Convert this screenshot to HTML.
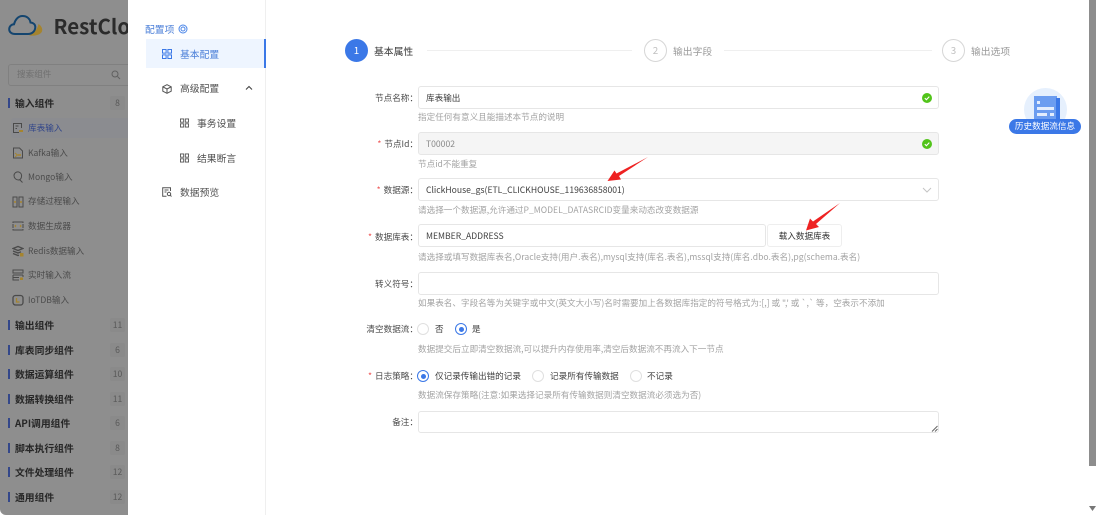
<!DOCTYPE html>
<html><head><meta charset="utf-8">
<style>
*{box-sizing:border-box}
html,body{margin:0;padding:0;width:1098px;height:515px;overflow:hidden;background:#fff}
body{font-family:"Noto Sans CJK SC","Liberation Sans",sans-serif;position:relative;color:#4a4a4a;filter:blur(.3px)}
.a{position:absolute;white-space:nowrap;line-height:14px}
.side{position:absolute;left:0;top:0;width:128px;height:515px;background:#8e8e8e;border-bottom-left-radius:6px;overflow:hidden}
.g{position:absolute;left:15px;font-size:9.8px;font-weight:bold;color:#262626;line-height:14px;white-space:nowrap}
.bar{position:absolute;left:8px;width:1.5px;height:10px;background:#33478a}
.b{position:absolute;left:110px;width:15px;height:14px;background:#8a8a8a;color:#585858;font-size:8.6px;line-height:14px;text-align:center;border-radius:2px}
.i{position:absolute;left:28px;font-size:8.6px;line-height:14px;color:#4b4b4b;white-space:nowrap}
.ic{position:absolute;left:12px;width:12px;height:12px;fill:none;stroke:#4a4a4a;stroke-width:1}
.m{position:absolute;font-size:9.8px;color:#505050;line-height:14px;white-space:nowrap}
.l{position:absolute;right:680px;font-size:8.6px;color:#4a4a4a;line-height:14px;white-space:nowrap}
.l i{font-style:normal;color:#ef5a5a;margin-right:3px}
.h{position:absolute;left:418px;font-size:8.6px;color:#a3a3a3;line-height:14px;white-space:nowrap}
.f{position:absolute;left:418px;width:521px;height:23px;border:1px solid #e6e6e6;border-radius:3px;background:#fff;font-size:8.6px;line-height:23px;padding-left:7px;color:#404040;white-space:nowrap}
.ok{position:absolute;left:922px;width:10px;height:10px}
.r{position:absolute;width:12px;height:12px;border:1px solid #e0e0e0;border-radius:50%;background:#fff}
.r.on{border-color:#3b78e7}
.r.on:after{content:"";position:absolute;left:2.5px;top:2.5px;width:5px;height:5px;border-radius:50%;background:#3b78e7}
.t{position:absolute;font-size:8.6px;line-height:14px;color:#404040;white-space:nowrap}
.st{position:absolute;top:39px;width:23px;height:23px;border:1px solid #d6d6d6;border-radius:50%;font-size:9.8px;line-height:21px;text-align:center;color:#c0c0c0;background:#fff}
.sl{position:absolute;top:50px;height:1px;background:#efefef}
.sx{position:absolute;top:44px;font-size:9.8px;line-height:14px;color:#9a9a9a;white-space:nowrap}
</style></head><body>

<div class="side">
  <svg style="position:absolute;left:8px;top:13px" width="36" height="24" viewBox="0 0 36 24"><path d="M21 22.5c5 .5 11 0 13-4 1-3-1-6-3.5-7.5-1 5-4 9-9.5 11.5z" fill="#a5842f"/><path d="M7 21c-3.5 0-5.8-2-5.8-4.8 0-2.700 2-4.700 4.800-4.900C7 7 10 3 14.500 3c4.800 0 7.500 3 8 6.500 3 .3 4.800 2 4.800 4.500 0 4-3 7-7.300 7z" fill="none" stroke="#14456f" stroke-width="2"/></svg>
  <div class="a" style="left:53.5px;top:13px;font-size:20.5px;line-height:24px;font-weight:bold;color:#2b2b2b">RestCloud</div>
  <div style="position:absolute;left:8px;top:64px;width:130px;height:22px;border:1px solid #808080;border-radius:3px"></div>
  <div class="a" style="left:17px;top:67px;font-size:8.6px;color:#707070">搜索组件</div>
  <svg style="position:absolute;left:111px;top:70px" width="10" height="10" viewBox="0 0 10 10"><circle cx="4" cy="4" r="3" fill="none" stroke="#606060"/><path d="M6.500 6.500L9 9" stroke="#606060"/></svg>

  <div class="bar" style="top:98px"></div><div class="g" style="top:96px">输入组件</div><div class="b" style="top:96px">8</div>
  <div style="position:absolute;left:11px;top:118px;width:117px;height:20px;background:#8b8c90;border-radius:3px 0 0 3px"></div>
  <svg class="ic" style="top:122px" viewBox="0 0 12 12"><path d="M7 10.500H1.500V1.500h8V6"/><path d="M3.500 4h3M3.500 6.500h1.500"/><path d="M7 9h4" stroke="#a5842f" stroke-width="2"/></svg><div class="i" style="top:121px;color:#33478a">库表输入</div>
  <svg class="ic" style="top:147px" viewBox="0 0 12 12"><path d="M1.500 11V1h6l3 3v7z"/><path d="M3 6l2.500 2L3 10" stroke="#a5842f"/><path d="M6 8h3" stroke="#a5842f" stroke-width="1.500"/></svg><div class="i" style="top:146px">Kafka输入</div>
  <svg class="ic" style="top:171px" viewBox="0 0 12 12"><path d="M2 4.500a3.800 3.800 0 1 1 7.500 1c0 2-1.500 3.500-3 3.500C4 9 2 7 2 4.500zM8 9l2.500 2.500"/></svg><div class="i" style="top:170px">Mongo输入</div>
  <svg class="ic" style="top:196px" viewBox="0 0 12 12"><rect x="1" y="1" width="4" height="10"/><rect x="7" y="1" width="4" height="10"/><path d="M2 6h2" stroke="#a5842f" stroke-width="1.500"/><path d="M8 6h2" stroke="#a5842f" stroke-width="1.500"/></svg><div class="i" style="top:194px">存储过程输入</div>
  <svg class="ic" style="top:220px" viewBox="0 0 12 12"><path d="M1 3V2h10v1M1 9v1h10V9M1 4v4M11 4v4"/><path d="M4 5L3 6l1 1M8 5l1 1-1 1" stroke="#a5842f"/></svg><div class="i" style="top:219px">数据生成器</div>
  <svg class="ic" style="top:245px" viewBox="0 0 12 12"><path d="M1 3.500L6 1.500l5 2-5 2zM1 6l5 2 3-1.200M1 8.500l5 2 1-.4" stroke-width="1.300"/><rect x="8" y="8" width="3.500" height="3.500" fill="#a5842f" stroke="none"/></svg><div class="i" style="top:244px">Redis数据输入</div>
  <svg class="ic" style="top:269px" viewBox="0 0 12 12"><rect x="1" y="1" width="10" height="3"/><path d="M1 6h10M1 6v5h6M11 6v2M1 8.500h6"/><rect x="8" y="8.500" width="3" height="2.500" fill="#a5842f" stroke="none"/></svg><div class="i" style="top:268px">实时输入流</div>
  <svg class="ic" style="top:294px" viewBox="0 0 12 12"><rect x="1" y="1.500" width="10" height="9.500" rx="2.500" stroke-width="1.300"/><path d="M4.500 4v4h3" stroke="#a5842f" stroke-width="1.300"/></svg><div class="i" style="top:293px">IoTDB输入</div>

  <div class="bar" style="top:320px"></div><div class="g" style="top:318px">输出组件</div><div class="b" style="top:318px">11</div>
  <div class="bar" style="top:345px"></div><div class="g" style="top:343px">库表同步组件</div><div class="b" style="top:343px">6</div>
  <div class="bar" style="top:369px"></div><div class="g" style="top:367px">数据运算组件</div><div class="b" style="top:367px">10</div>
  <div class="bar" style="top:394px"></div><div class="g" style="top:392px">数据转换组件</div><div class="b" style="top:392px">11</div>
  <div class="bar" style="top:418px"></div><div class="g" style="top:416px">API调用组件</div><div class="b" style="top:416px">6</div>
  <div class="bar" style="top:443px"></div><div class="g" style="top:441px">脚本执行组件</div><div class="b" style="top:441px">8</div>
  <div class="bar" style="top:467px"></div><div class="g" style="top:465px">文件处理组件</div><div class="b" style="top:465px">12</div>
  <div class="bar" style="top:492px"></div><div class="g" style="top:490px">通用组件</div><div class="b" style="top:490px">12</div>
</div>

<!-- config menu -->
<div class="a" style="left:145px;top:22px;font-size:9.8px;color:#4b7fd8">配置项</div>
<svg style="position:absolute;left:178px;top:24px" width="10" height="10" viewBox="0 0 10 10"><circle cx="5" cy="5" r="4" fill="none" stroke="#4b86e8"/><circle cx="5" cy="5" r="2" fill="none" stroke="#4b86e8"/></svg>
<div style="position:absolute;left:265px;top:0;width:1px;height:515px;background:#efefef"></div>
<div style="position:absolute;left:146px;top:39px;width:120px;height:29px;background:#eef5ff;border-right:2px solid #3b78e7"></div>
<svg style="position:absolute;left:162px;top:49px" width="10" height="10" viewBox="0 0 10 10" fill="none" stroke="#3b78e7"><rect x=".5" y=".5" width="3.600" height="3.600"/><rect x="5.900" y=".5" width="3.600" height="3.600"/><rect x=".5" y="5.900" width="3.600" height="3.600"/><rect x="5.900" y="5.900" width="3.600" height="3.600"/></svg>
<div class="m" style="left:180px;top:47px;color:#4b7fd8">基本配置</div>
<svg style="position:absolute;left:162px;top:84px" width="10" height="10" viewBox="0 0 10 10" fill="none" stroke="#555"><path d="M5 .7L9.200 2.800V7.200L5 9.300.8 7.200V2.800zM.8 2.800L5 5l4.200-2.200M5 5v4.300"/></svg>
<div class="m" style="left:180px;top:81px">高级配置</div>
<svg style="position:absolute;left:245px;top:85px" width="8" height="6" viewBox="0 0 8 6" fill="none" stroke="#444" stroke-width="1.100"><path d="M1 4.500L4 1.500l3 3"/></svg>
<svg style="position:absolute;left:180px;top:118px" width="9" height="10" viewBox="0 0 10 10" fill="none" stroke="#555"><rect x=".5" y=".5" width="3.600" height="3.600"/><rect x="5.900" y=".5" width="3.600" height="3.600"/><rect x=".5" y="5.900" width="3.600" height="3.600"/><rect x="5.900" y="5.900" width="3.600" height="3.600"/></svg>
<div class="m" style="left:197px;top:116px">事务设置</div>
<svg style="position:absolute;left:180px;top:153px" width="9" height="10" viewBox="0 0 10 10" fill="none" stroke="#555"><rect x=".5" y=".5" width="3.600" height="3.600"/><rect x="5.900" y=".5" width="3.600" height="3.600"/><rect x=".5" y="5.900" width="3.600" height="3.600"/><rect x="5.900" y="5.900" width="3.600" height="3.600"/></svg>
<div class="m" style="left:197px;top:151px">结果断言</div>
<svg style="position:absolute;left:162px;top:187px" width="10" height="10" viewBox="0 0 10 10" fill="none" stroke="#555"><path d="M8.500 4V.7H.7v8.600h3.800M2.500 3h4M2.500 5h2"/><circle cx="7" cy="7" r="1.700"/><path d="M8.200 8.200L9.500 9.500"/></svg>
<div class="m" style="left:180px;top:185px">数据预览</div>

<!-- steps -->
<div class="st" style="left:345px;background:#3b78e7;border-color:#3b78e7;color:#fff">1</div>
<div class="sx" style="left:374px;color:#3a3a3a">基本属性</div>
<div class="sl" style="left:427px;width:205px"></div>
<div class="st" style="left:644px">2</div>
<div class="sx" style="left:673px">输出字段</div>
<div class="sl" style="left:724px;width:208px"></div>
<div class="st" style="left:942px">3</div>
<div class="sx" style="left:971px">输出选项</div>

<!-- form -->
<div class="l" style="top:91px">节点名称：</div>
<div class="f" style="top:86px">库表输出</div>
<svg class="ok" style="top:93px" viewBox="0 0 10 10"><circle cx="5" cy="5" r="5" fill="#52c41a"/><path d="M2.800 5.100L4.400 6.700 7.300 3.600" fill="none" stroke="#fff" stroke-width="1.100"/></svg>
<div class="h" style="top:110px">指定任何有意义且能描述本节点的说明</div>

<div class="l" style="top:137px"><i>*</i>节点Id：</div>
<div class="f" style="top:132px;background:#f5f5f5;color:#8a8a8a">T00002</div>
<svg class="ok" style="top:139px" viewBox="0 0 10 10"><circle cx="5" cy="5" r="5" fill="#52c41a"/><path d="M2.800 5.100L4.400 6.700 7.300 3.600" fill="none" stroke="#fff" stroke-width="1.100"/></svg>
<div class="h" style="top:157px">节点id不能重复</div>

<div class="l" style="top:183px"><i>*</i>数据源：</div>
<div class="f" style="top:178px">ClickHouse_gs(ETL_CLICKHOUSE_119636858001)</div>
<svg style="position:absolute;left:922px;top:187px" width="10" height="6" viewBox="0 0 10 6" fill="none" stroke="#c4c4c4"><path d="M1 1l4 4 4-4"/></svg>
<div class="h" style="top:203px">请选择一个数据源,允许通过P_MODEL_DATASRCID变量来动态改变数据源</div>

<div class="l" style="top:230px"><i>*</i>数据库表：</div>
<div class="f" style="top:224px;width:348px">MEMBER_ADDRESS</div>
<div style="position:absolute;left:767px;top:224px;width:75px;height:23px;border:1px solid #eee;border-radius:3px;font-size:8.6px;line-height:22px;text-align:center;color:#333">载入数据库表</div>
<div class="h" style="top:250px">请选择或填写数据库表名,Oracle支持(用户.表名),mysql支持(库名.表名),mssql支持(库名.dbo.表名),pg(schema.表名)</div>

<div class="l" style="top:277px">转义符号：</div>
<div class="f" style="top:272px"></div>
<div class="h" style="top:296px">如果表名、字段名等为关键字或中文(英文大小写)名时需要加上各数据库指定的符号格式为:[,] 或 ",' 或 `,` 等，空表示不添加</div>

<div class="l" style="top:322px">清空数据流：</div>
<div class="r" style="left:417px;top:323px"></div><div class="t" style="left:435px;top:322px">否</div>
<div class="r on" style="left:455px;top:323px"></div><div class="t" style="left:472px;top:322px">是</div>
<div class="h" style="top:342px">数据提交后立即清空数据流,可以提升内存使用率,清空后数据流不再流入下一节点</div>

<div class="l" style="top:369px"><i>*</i>日志策略：</div>
<div class="r on" style="left:417px;top:370px"></div><div class="t" style="left:435px;top:369px">仅记录传输出错的记录</div>
<div class="r" style="left:532px;top:370px"></div><div class="t" style="left:550px;top:369px">记录所有传输数据</div>
<div class="r" style="left:630px;top:370px"></div><div class="t" style="left:647px;top:369px">不记录</div>
<div class="h" style="top:388px">数据流保存策略(注意:如果选择记录所有传输数据则清空数据流必须选为否)</div>

<div class="l" style="top:415px">备注：</div>
<div class="f" style="top:411px;height:22px"></div>
<svg style="position:absolute;left:931px;top:425px" width="7" height="7" viewBox="0 0 7 7" stroke="#666" fill="none"><path d="M1 6.500L6.500 1M4 6.500L6.500 4"/></svg>

<!-- arrows -->
<svg style="position:absolute;left:0;top:0" width="1098" height="515" viewBox="0 0 1098 515">
<path d="M648 157L619 176L621 179.500L607.500 181L614.500 170.500L616.500 173.500Z" fill="#ee2222"/>
<path d="M840 203L816 224L819 227L806 230.500L810 218.500L813 221.500Z" fill="#ee2222"/>
</svg>

<!-- floating -->
<div style="position:absolute;left:1024px;top:88px;width:43px;height:43px;border-radius:50%;background:#e6f0fd"></div>
<svg style="position:absolute;left:1034px;top:96px" width="26" height="24" viewBox="0 0 26 24"><rect x="0" y="0" width="23" height="24" fill="#6c9df0"/><rect x="22" y="2" width="4" height="22" fill="#3b78e7"/><rect x="3" y="5" width="3" height="3" fill="#e3edfd"/><rect x="3" y="11" width="17" height="3" fill="#e3edfd"/><rect x="3" y="17" width="10" height="3" fill="#e3edfd"/><rect x="16" y="17" width="4" height="3" fill="#e3edfd"/></svg>
<div style="position:absolute;left:1009px;top:119px;width:72px;height:15px;border-radius:8px;background:#3b78e7;color:#fff;font-size:8.6px;line-height:15px;text-align:center;white-space:nowrap">历史数据流信息</div>

<!-- scrollbar -->
<div style="position:absolute;left:1089px;top:0;width:6.5px;height:466px;background:#8d8d8d"></div>
<svg style="position:absolute;left:1089px;top:506px" width="7" height="5" viewBox="0 0 7 5"><path d="M0 0h7L3.500 5z" fill="#777"/></svg>
</body></html>
